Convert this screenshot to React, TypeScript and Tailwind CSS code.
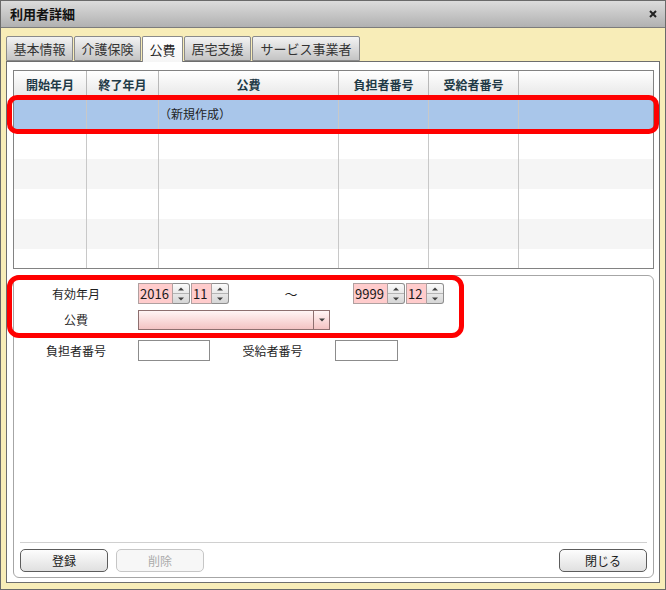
import React from "react";

const Arrow = ({ down }: { down?: boolean }) => (
  <svg width="6" height="4" viewBox="0 0 6 4">
    <path d={down ? "M0 0.5h6L3 3.5z" : "M0 3.5h6L3 0.5z"} fill="#404040" />
  </svg>
);

const Spin = ({ value, w }: { value: string; w: string }) => (
  <div className="flex h-[21px]">
    <div
      className={`${w} h-full border border-[#b0a0a0] bg-[#ffcccc] pl-[1px] text-[13px] leading-[19px] text-[#1a1a1a]`}
    >
      {value}
    </div>
    <div className="flex w-[17px] flex-col overflow-hidden rounded-r-[3px] border border-l-0 border-[#8e8e8e] bg-gradient-to-b from-[#fbfbfb] to-[#d6d6d6]">
      <div className="flex flex-1 items-center justify-center border-b border-[#b4b4b4]">
        <Arrow />
      </div>
      <div className="flex flex-1 items-center justify-center">
        <Arrow down />
      </div>
    </div>
  </div>
);

const tabs = [
  { label: "基本情報", w: "w-[67px]" },
  { label: "介護保険", w: "w-[67px]" },
  { label: "公費", w: "w-[41px]", active: true },
  { label: "居宅支援", w: "w-[67px]" },
  { label: "サービス事業者", w: "w-[108px]" },
];

const cols = ["開始年月", "終了年月", "公費", "負担者番号", "受給者番号", ""];
const colW = ["w-[73px]", "w-[72px]", "w-[180px]", "w-[90px]", "w-[90px]", "flex-1"];

const rows = [
  { bg: "bg-[#a9c6ea]", text: "（新規作成）" },
  { bg: "bg-white" },
  { bg: "bg-[#f5f5f5]" },
  { bg: "bg-white" },
  { bg: "bg-[#f5f5f5]" },
  { bg: "bg-white" },
];

const Btn = ({ label, disabled }: { label: string; disabled?: boolean }) => (
  <div
    className={`flex h-[23px] w-[88px] items-center justify-center rounded-[5px] border text-[12px] ${
      disabled
        ? "border-[#c6c6c6] bg-[#f7f7f7] text-[#ababab]"
        : "border-[#5c5c5c] bg-gradient-to-b from-[#fdfdfd] to-[#e0e0e0] text-[#1a1a1a]"
    }`}
  >
    {label}
  </div>
);

export default function App() {
  return (
    <div className="relative flex h-[590px] w-[666px] flex-col border border-[#6a6a6a] bg-[#f8edb8] font-['Noto_Sans_CJK_JP','Noto_Sans',sans-serif] text-[12px] text-[#1e1e1e]">
      {/* title bar */}
      <div className="flex h-[27px] shrink-0 items-center justify-between border-b border-[#7c7c7c] bg-gradient-to-b from-[#dcdcdc] to-[#b1b1b1] pl-[9px] pr-[8px]">
        <span className="text-[13px] font-bold text-[#111]">利用者詳細</span>
        <svg width="8" height="8" viewBox="0 0 8 8">
          <path d="M1 1l6 6M7 1L1 7" stroke="#222" strokeWidth="2" />
        </svg>
      </div>

      <div className="flex flex-1 flex-col pb-[6px] pl-[5px] pr-[5px] pt-[8px]">
        {/* tabs */}
        <div className="relative z-10 flex h-[25px] gap-[1px]">
          {tabs.map((t) => (
            <div
              key={t.label}
              className={`${t.w} flex items-center justify-center rounded-t-[2px] border border-[#8a8a8a] text-[13px] ${
                t.active
                  ? "-mb-[1px] border-b-0 bg-gradient-to-b from-[#ffffff] to-[#f6f6f6] text-[#222]"
                  : "bg-gradient-to-b from-[#f3f3f3] to-[#c4c4c4] text-[#333]"
              }`}
            >
              {t.label}
            </div>
          ))}
        </div>

        {/* panel */}
        <div className="flex flex-1 flex-col border border-[#6e6e6e] bg-white pb-[4px] pl-[6px] pr-[5px] pt-[8px]">
          {/* grid */}
          <div className="flex h-[199px] shrink-0 flex-col overflow-hidden border border-[#828282]">
            <div className="flex h-[28px] shrink-0 border-b border-[#b0b0b0] bg-gradient-to-b from-[#ffffff] to-[#e6e6e6]">
              {cols.map((c, i) => (
                <div
                  key={i}
                  className={`${colW[i]} flex items-center justify-center font-bold text-[#213a46] ${
                    i < 5 ? "border-r border-[#b8b8b8]" : ""
                  }`}
                >
                  {c}
                </div>
              ))}
            </div>
            {rows.map((r, ri) => (
              <div key={ri} className={`flex h-[30px] shrink-0 ${r.bg}`}>
                {cols.map((_, i) => (
                  <div
                    key={i}
                    className={`${colW[i]} flex items-center ${
                      i < 5 ? "border-r border-[#c8c8c8]" : ""
                    }`}
                  >
                    {i === 2 && r.text ? r.text : null}
                  </div>
                ))}
              </div>
            ))}
          </div>

          {/* form */}
          <div className="mt-[6px] flex flex-1 flex-col rounded-[6px] border border-[#a6a6a6] pb-[5px] pt-[7px]">
            <div className="flex h-[21px] items-center">
              <div className="w-[124px] text-center">有効年月</div>
              <Spin value="2016" w="w-[35px]" />
              <div className="ml-[1px]">
                <Spin value="11" w="w-[21px]" />
              </div>
              <div className="w-[124px] text-center text-[13px]">～</div>
              <Spin value="9999" w="w-[35px]" />
              <div className="ml-[1px]">
                <Spin value="12" w="w-[21px]" />
              </div>
            </div>

            <div className="mt-[6px] flex h-[20px] items-center">
              <div className="w-[124px] text-center">公費</div>
              <div className="flex h-[20px] w-[192px] border border-[#8d6f6f] bg-gradient-to-b from-[#fff5f5] to-[#f3c3c3]">
                <div className="flex-1" />
                <div className="flex w-[16px] items-center justify-center border-l border-[#8d6f6f]">
                  <Arrow down />
                </div>
              </div>
            </div>

            <div className="mt-[10px] flex h-[21px] items-center">
              <div className="w-[124px] text-center">負担者番号</div>
              <div className="h-[21px] w-[72px] border border-[#8c8c8c] bg-white" />
              <div className="w-[125px] text-center">受給者番号</div>
              <div className="h-[21px] w-[63px] border border-[#8c8c8c] bg-white" />
            </div>

            <div className="ml-[6px] mr-[6px] mt-auto border-t border-[#d0d0d0]" />
            <div className="mt-[6px] flex items-center pl-[6px] pr-[6px]">
              <Btn label="登録" />
              <div className="ml-[8px]">
                <Btn label="削除" disabled />
              </div>
              <div className="ml-auto">
                <Btn label="閉じる" />
              </div>
            </div>
          </div>
        </div>
      </div>

      {/* annotation overlays */}
      <div className="pointer-events-none absolute left-[6px] top-[94px] h-[39px] w-[652px] rounded-[10px] border-[5px] border-[#ff0000]" />
      <div className="pointer-events-none absolute left-[6px] top-[274px] h-[63px] w-[457px] rounded-[12px] border-[5px] border-[#ff0000]" />
    </div>
  );
}
